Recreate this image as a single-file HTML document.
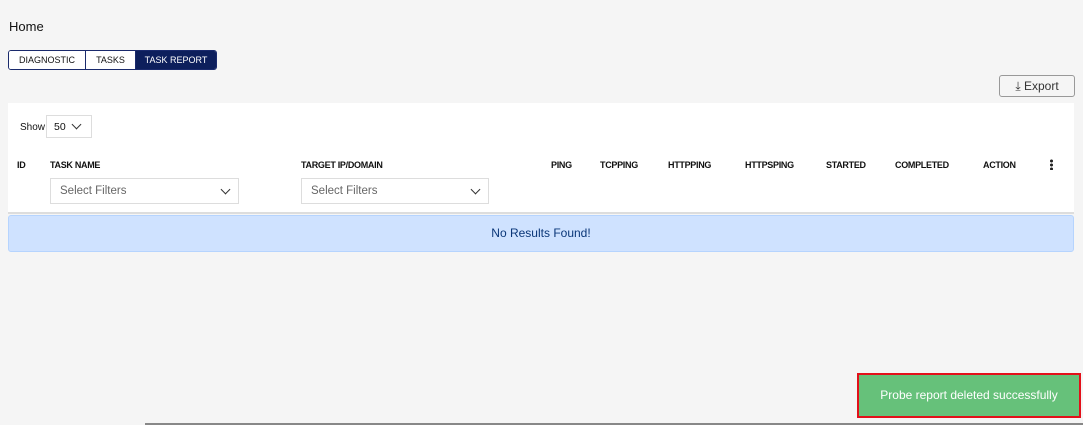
<!DOCTYPE html>
<html><head><style>
*{box-sizing:border-box;margin:0;padding:0}
body{width:1083px;height:425px;background:#f5f5f5;font-family:"Liberation Sans",sans-serif;position:relative;overflow:hidden;color:#111}
.a{position:absolute}
.tabs{left:8px;top:50px;height:20px;display:flex;border:1px solid #1a2a6c;border-radius:3px;overflow:hidden;font-size:9px}
.tabs div{line-height:18px;border-right:1px solid #1a2a6c;background:#fff;text-align:center}
.tabs div:last-child{background:#0d1f5c;color:#fff;border:none}
.th{font-size:9px;font-weight:bold;top:160px;letter-spacing:-0.3px}
.sel{height:26px;border:1px solid #ddd;background:#fff;font-size:11.5px;color:#666;padding:6px 9px;top:178px}
.chev{position:absolute;right:9px;top:7px;width:7px;height:7px;border-right:1.5px solid #333;border-bottom:1.5px solid #333;transform:rotate(45deg)}
</style></head><body>
<div class="a" style="left:9px;top:19px;font-size:13px">Home</div>
<div class="a tabs"><div style="width:77px">DIAGNOSTIC</div><div style="width:50px">TASKS</div><div style="width:80px">TASK REPORT</div></div>
<div class="a" style="left:999px;top:75px;width:76px;height:22px;border:1px solid #999;border-radius:3px;font-size:12px;color:#333;text-align:center;line-height:20px">&#10515; Export</div>
<div class="a" style="left:8px;top:103px;width:1066px;height:111px;background:#fff;border-bottom:2px solid #ddd"></div>
<div class="a" style="left:20px;top:122px;font-size:10px">Show</div>
<div class="a" style="left:46px;top:115px;width:46px;height:23px;border:1px solid #ddd;font-size:10.5px;padding:5px 7px">50<span class="chev" style="top:5px;right:11px"></span></div>
<div class="a th" style="left:17px">ID</div>
<div class="a th" style="left:50px">TASK NAME</div>
<div class="a th" style="left:301px">TARGET IP/DOMAIN</div>
<div class="a th" style="left:551px">PING</div>
<div class="a th" style="left:600px">TCPPING</div>
<div class="a th" style="left:668px">HTTPPING</div>
<div class="a th" style="left:745px">HTTPSPING</div>
<div class="a th" style="left:826px">STARTED</div>
<div class="a th" style="left:895px">COMPLETED</div>
<div class="a th" style="left:983px">ACTION</div>
<div class="a" style="left:1050px;top:159px;width:3px;height:11px;background:radial-gradient(circle,#222 1.4px,transparent 1.6px) 0 0/3px 4px"></div>
<div class="a sel" style="left:50px;width:189px">Select Filters<span class="chev"></span></div>
<div class="a sel" style="left:301px;width:188px">Select Filters<span class="chev"></span></div>
<div class="a" style="left:8px;top:215px;width:1066px;height:37px;background:#cfe2ff;border:1px solid #b6d4fe;border-radius:3px;text-align:center;line-height:35px;font-size:12px;color:#0a3678">No Results Found!</div>
<div class="a" style="left:857px;top:373px;width:224px;height:45px;background:#66c17a;border:2px solid #e3101a;color:#fff;font-size:12px;text-align:center;line-height:41px">Probe report deleted successfully</div>
<div class="a" style="left:145px;top:423px;width:938px;height:2px;background:#888"></div>
</body></html>
